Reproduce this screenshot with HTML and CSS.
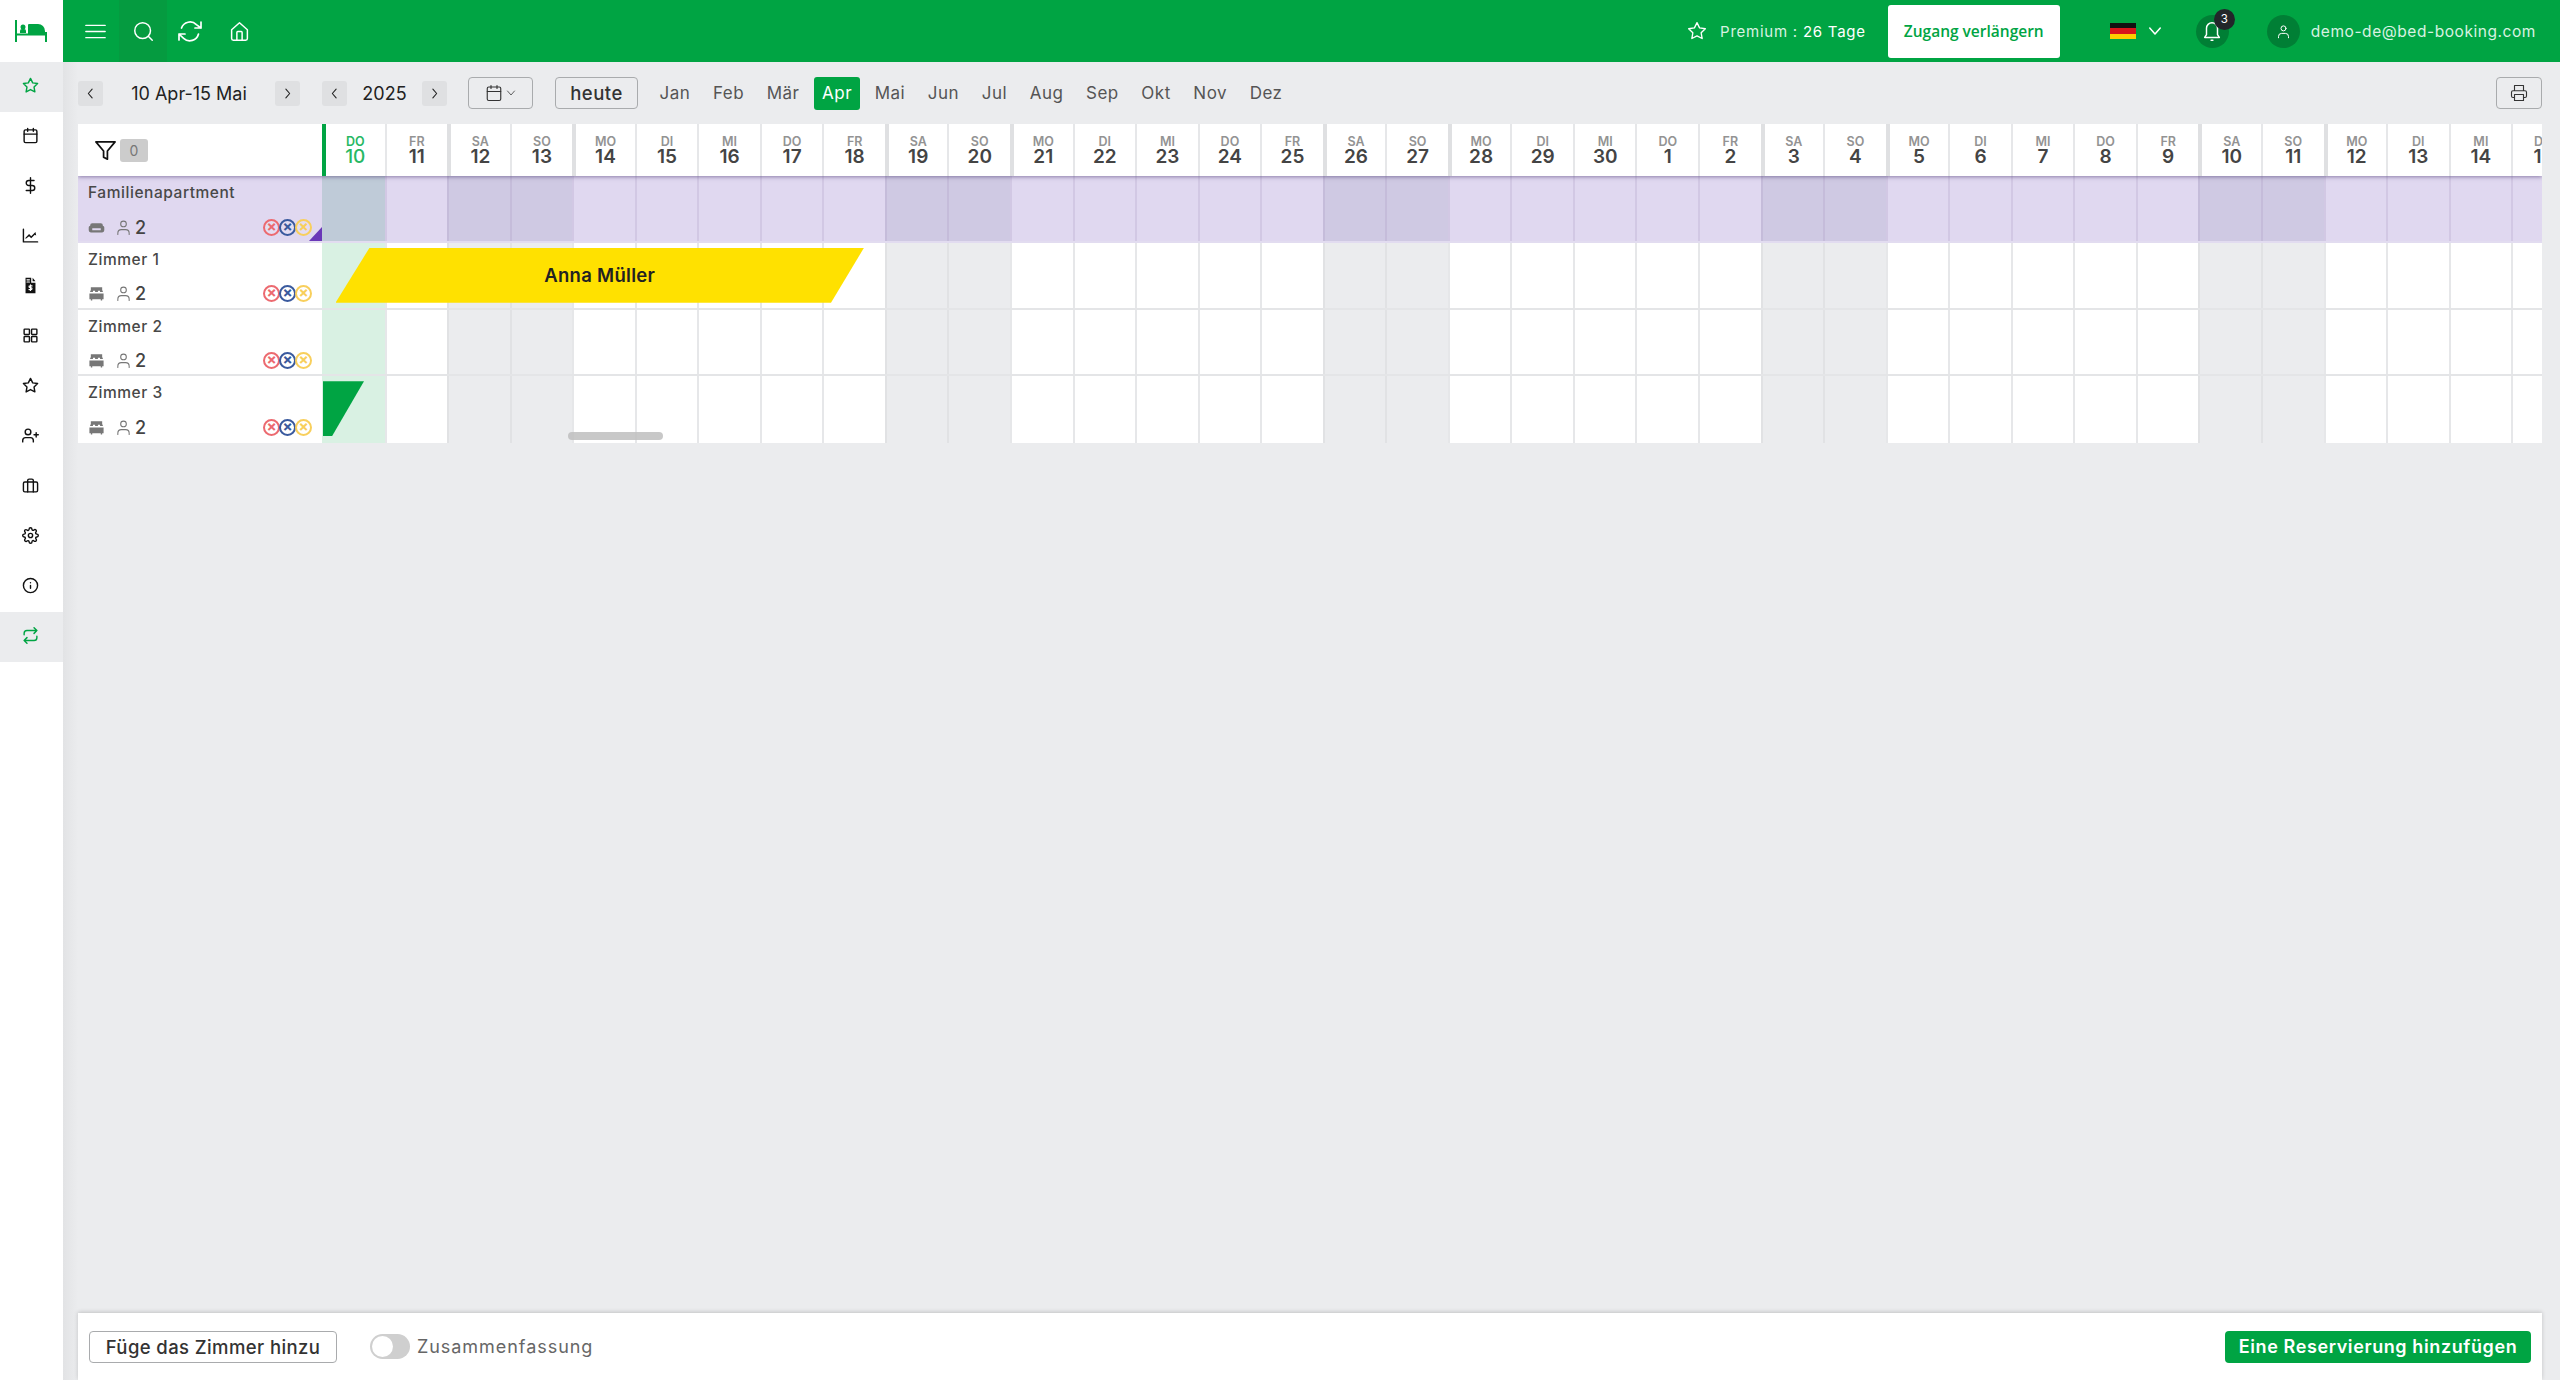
FILE: index.html
```html
<!DOCTYPE html>
<html lang="de">
<head>
  <meta charset="UTF-8" />
  <meta name="viewport" content="width=device-width, initial-scale=1.0" />
  <title>Bed-Booking Kalender</title>
  <link rel="stylesheet" href="styles.css">
</head>
<body>
  <!-- shared icons -->
  <svg class="sprite" xmlns="http://www.w3.org/2000/svg">
    <symbol id="i-star" viewBox="0 0 24 24"><polygon points="12 2 15.09 8.26 22 9.27 17 14.14 18.18 21.02 12 17.77 5.82 21.02 7 14.14 2 9.27 8.91 8.26 12 2"/></symbol>
    <symbol id="i-calendar" viewBox="0 0 24 24"><rect x="3" y="4" width="18" height="18" rx="2"/><path d="M16 2v4M8 2v4M3 10h18"/></symbol>
    <symbol id="i-dollar" viewBox="0 0 24 24"><path d="M12 1v22M17 5H9.5a3.5 3.5 0 0 0 0 7h5a3.5 3.5 0 0 1 0 7H6"/></symbol>
    <symbol id="i-chart" viewBox="0 0 24 24"><path d="M2 3v18h20"/><path class="solid" d="M5 15l5-5 3 3 6-6 1 5-2-1-5 5-3-3-5 4z"/></symbol>
    <symbol id="i-invoice" viewBox="0 0 24 24"><path class="solid" d="M5 1h8v7h6V23H5z"/><path class="solid" d="M15 1l4 5h-4z"/><path class="cut" d="M12 11v8M14.2 12.6h-3a1.3 1.3 0 0 0 0 2.6h1.6a1.3 1.3 0 0 1 0 2.6H9.8M7 4h3.500M7 7h3.500"/></symbol>
    <symbol id="i-grid" viewBox="0 0 24 24"><rect x="3" y="3" width="7.500" height="7.500" rx="1"/><rect x="13.500" y="3" width="7.500" height="7.500" rx="1"/><rect x="13.500" y="13.500" width="7.500" height="7.500" rx="1"/><rect x="3" y="13.500" width="7.500" height="7.500" rx="1"/></symbol>
    <symbol id="i-user-plus" viewBox="0 0 24 24"><path d="M16 21v-2a4 4 0 0 0-4-4H5a4 4 0 0 0-4 4v2"/><circle cx="8.500" cy="7" r="4"/><path d="M20 8v6M23 11h-6"/></symbol>
    <symbol id="i-case" viewBox="0 0 24 24"><rect x="2" y="7" width="20" height="14" rx="2"/><path d="M16 21V5a2 2 0 0 0-2-2h-4a2 2 0 0 0-2 2v16"/></symbol>
    <symbol id="i-gear" viewBox="0 0 24 24"><circle cx="12" cy="12" r="3"/><path d="M19.4 15a1.65 1.65 0 0 0 .33 1.82l.06.06a2 2 0 0 1 0 2.83 2 2 0 0 1-2.83 0l-.06-.06a1.65 1.65 0 0 0-1.82-.33 1.65 1.65 0 0 0-1 1.51V21a2 2 0 0 1-2 2 2 2 0 0 1-2-2v-.09A1.65 1.65 0 0 0 9 19.4a1.65 1.65 0 0 0-1.82.33l-.06.06a2 2 0 0 1-2.83 0 2 2 0 0 1 0-2.83l.06-.06a1.65 1.65 0 0 0 .33-1.82 1.65 1.65 0 0 0-1.51-1H3a2 2 0 0 1-2-2 2 2 0 0 1 2-2h.09A1.65 1.65 0 0 0 4.600 9a1.65 1.65 0 0 0-.33-1.82l-.06-.06a2 2 0 0 1 0-2.83 2 2 0 0 1 2.83 0l.06.06a1.65 1.65 0 0 0 1.82.33H9a1.65 1.65 0 0 0 1-1.51V3a2 2 0 0 1 2-2 2 2 0 0 1 2 2v.09a1.65 1.65 0 0 0 1 1.51 1.65 1.65 0 0 0 1.82-.33l.06-.06a2 2 0 0 1 2.83 0 2 2 0 0 1 0 2.83l-.06.06a1.65 1.65 0 0 0-.33 1.82V9a1.65 1.65 0 0 0 1.51 1H21a2 2 0 0 1 2 2 2 2 0 0 1-2 2h-.09a1.65 1.65 0 0 0-1.51 1z"/></symbol>
    <symbol id="i-info" viewBox="0 0 24 24"><circle cx="12" cy="12" r="10"/><path d="M12 16v-4M12 8h.01"/></symbol>
    <symbol id="i-repeat" viewBox="0 0 24 24"><path d="M17 1l4 4-4 4M3 11V9a4 4 0 0 1 4-4h14M7 23l-4-4 4-4M21 13v2a4 4 0 0 1-4 4H3"/></symbol>
    <symbol id="i-menu" viewBox="0 0 24 24"><path d="M1 5h22M1 12h22M1 19h22"/></symbol>
    <symbol id="i-search" viewBox="0 0 24 24"><circle cx="11" cy="11" r="9"/><path d="M22 22l-4.500-4.500"/></symbol>
    <symbol id="i-refresh" viewBox="0 0 24 24"><path d="M23 3v6h-6M1 21v-6h6M3.510 9a9 9 0 0 1 14.850-3.360L23 9M1 15l4.640 4.360A9 9 0 0 0 20.490 15"/></symbol>
    <symbol id="i-home" viewBox="0 0 24 24"><path d="M3 10l9-8 9 8v10a2 2 0 0 1-2 2H5a2 2 0 0 1-2-2z"/><path d="M9 22v-9a1 1 0 0 1 1-1h4a1 1 0 0 1 1 1v9"/></symbol>
    <symbol id="i-bell" viewBox="0 0 24 24"><path d="M18 16V9a6 6 0 0 0-12 0v7l-2 3h16z"/><path d="M11 22h2"/></symbol>
    <symbol id="i-user" viewBox="0 0 24 24"><circle cx="12" cy="7" r="4"/><path d="M4 22v-2a5 5 0 0 1 5-5h6a5 5 0 0 1 5 5v2"/></symbol>
    <symbol id="i-chevron" viewBox="0 0 24 24"><path d="M5 8l7 8 7-8"/></symbol>
    <symbol id="i-left" viewBox="0 0 24 24"><path d="M15 4l-7 8 7 8"/></symbol>
    <symbol id="i-right" viewBox="0 0 24 24"><path d="M9 4l7 8-7 8"/></symbol>
    <symbol id="i-printer" viewBox="0 0 24 24"><path d="M6 9V2h12v7M6 18H4a2 2 0 0 1-2-2v-5a2 2 0 0 1 2-2h16a2 2 0 0 1 2 2v5a2 2 0 0 1-2 2h-2"/><rect x="6" y="14" width="12" height="8"/></symbol>
    <symbol id="i-filter" viewBox="0 0 24 24"><polygon points="22 3 2 3 10 12.460 10 19 14 21 14 12.460 22 3"/></symbol>
    <symbol id="i-bed" viewBox="0 0 24 24"><path class="solid" d="M4 3h16v4l1 2v1h-4V8h-3v2h-4V8H7v2H3V9l1-2zM2 12h20v8h-2v2h-2v-2H6v2H4v-2H2z"/></symbol>
    <symbol id="i-sofa" viewBox="0 0 24 24"><path class="solid" d="M6 6h12a3 3 0 0 1 3 3v1a2 2 0 0 1 2 2v4a3 3 0 0 1-3 3H4a3 3 0 0 1-3-3v-4a2 2 0 0 1 2-2V9a3 3 0 0 1 3-3zm0 7v3h12v-3z"/></symbol>
  </svg>

  <div class="app">
    <aside class="sidebar">
      <div class="logo">
        <svg class="logo-bed" viewBox="0 0 32 22"><path class="logo-line" d="M1 0v22M1 14.500h30M31 12v10"/><circle cx="8" cy="7" r="2.500"/><path d="M5 13v-2a2 2 0 0 1 2-2h2a2 2 0 0 1 2 2v2z"/><path d="M13 14V5a1 1 0 0 1 1-1h9a7 7 0 0 1 7 7v3z"/></svg>
      </div>
      <nav class="side-nav">
        <a class="side-item active"><svg class="icon"><use href="#i-star"/></svg></a>
        <a class="side-item"><svg class="icon"><use href="#i-calendar"/></svg></a>
        <a class="side-item"><svg class="icon"><use href="#i-dollar"/></svg></a>
        <a class="side-item"><svg class="icon"><use href="#i-chart"/></svg></a>
        <a class="side-item"><svg class="icon"><use href="#i-invoice"/></svg></a>
        <a class="side-item"><svg class="icon"><use href="#i-grid"/></svg></a>
        <a class="side-item"><svg class="icon"><use href="#i-star"/></svg></a>
        <a class="side-item"><svg class="icon"><use href="#i-user-plus"/></svg></a>
        <a class="side-item"><svg class="icon"><use href="#i-case"/></svg></a>
        <a class="side-item"><svg class="icon"><use href="#i-gear"/></svg></a>
        <a class="side-item"><svg class="icon"><use href="#i-info"/></svg></a>
        <a class="side-item active"><svg class="icon"><use href="#i-repeat"/></svg></a>
      </nav>
    </aside>

    <div class="main">
      <header class="topbar">
        <div class="top-left">
          <a class="top-btn"><svg class="icon"><use href="#i-menu"/></svg></a>
          <a class="top-btn current"><svg class="icon"><use href="#i-search"/></svg></a>
          <a class="top-btn"><svg class="icon wide"><use href="#i-refresh"/></svg></a>
          <a class="top-btn"><svg class="icon"><use href="#i-home"/></svg></a>
        </div>
        <div class="top-right">
          <svg class="icon premium-star"><use href="#i-star"/></svg>
          <span class="premium">Premium : <b>26 Tage</b></span>
          <a class="extend">Zugang verlängern</a>
          <div class="lang">
            <span class="flag"></span>
            <svg class="icon"><use href="#i-chevron"/></svg>
          </div>
          <a class="round-btn bell">
            <svg class="icon"><use href="#i-bell"/></svg>
            <span class="badge">3</span>
          </a>
          <a class="round-btn"><svg class="icon"><use href="#i-user"/></svg></a>
          <span class="email">demo-de@bed-booking.com</span>
        </div>
      </header>

      <div class="toolbar">
        <button class="step"><svg class="icon"><use href="#i-left"/></svg></button>
        <span class="range">10 Apr-15 Mai</span>
        <button class="step"><svg class="icon"><use href="#i-right"/></svg></button>
        <button class="step step-year"><svg class="icon"><use href="#i-left"/></svg></button>
        <span class="year">2025</span>
        <button class="step"><svg class="icon"><use href="#i-right"/></svg></button>
        <button class="outline cal-btn">
          <svg class="icon"><use href="#i-calendar"/></svg>
          <svg class="icon small"><use href="#i-chevron"/></svg>
        </button>
        <button class="outline today-btn">heute</button>
        <div class="months">
          <a>Jan</a><a>Feb</a><a>Mär</a><a class="active">Apr</a><a>Mai</a><a>Jun</a>
          <a>Jul</a><a>Aug</a><a>Sep</a><a>Okt</a><a>Nov</a><a>Dez</a>
        </div>
        <button class="outline print-btn"><svg class="icon"><use href="#i-printer"/></svg></button>
      </div>

      <div class="content">
        <div class="planner">
          <div class="planner-head">
            <div class="filter-cell">
              <svg class="icon"><use href="#i-filter"/></svg>
              <span class="filter-count">0</span>
            </div>
            <div class="days" id="headDays"></div>
          </div>

          <div class="room-row group">
            <div class="room-cell">
              <div class="room-name">Familienapartment</div>
              <div class="room-info">
                <svg class="icon bed"><use href="#i-sofa"/></svg>
                <svg class="icon person"><use href="#i-user"/></svg>
                <span class="beds">2</span>
                <div class="channels"><i class="red">×</i><i class="blue">×</i><i class="yellow">×</i></div>
              </div>
              <span class="corner"></span>
            </div>
            <div class="days room-days"></div>
          </div>

          <div class="room-row">
            <div class="room-cell">
              <div class="room-name">Zimmer 1</div>
              <div class="room-info">
                <svg class="icon bed"><use href="#i-bed"/></svg>
                <svg class="icon person"><use href="#i-user"/></svg>
                <span class="beds">2</span>
                <div class="channels"><i class="red">×</i><i class="blue">×</i><i class="yellow">×</i></div>
              </div>
            </div>
            <div class="days room-days"></div>
            <div class="booking yellow-bar">Anna Müller</div>
          </div>

          <div class="room-row">
            <div class="room-cell">
              <div class="room-name">Zimmer 2</div>
              <div class="room-info">
                <svg class="icon bed"><use href="#i-bed"/></svg>
                <svg class="icon person"><use href="#i-user"/></svg>
                <span class="beds">2</span>
                <div class="channels"><i class="red">×</i><i class="blue">×</i><i class="yellow">×</i></div>
              </div>
            </div>
            <div class="days room-days"></div>
          </div>

          <div class="room-row">
            <div class="room-cell">
              <div class="room-name">Zimmer 3</div>
              <div class="room-info">
                <svg class="icon bed"><use href="#i-bed"/></svg>
                <svg class="icon person"><use href="#i-user"/></svg>
                <span class="beds">2</span>
                <div class="channels"><i class="red">×</i><i class="blue">×</i><i class="yellow">×</i></div>
              </div>
            </div>
            <div class="days room-days"></div>
            <div class="booking green-bar"></div>
          </div>

          <div class="scroll-thumb"></div>
        </div>
      </div>

      <footer class="footer">
        <button class="outline add-room">Füge das Zimmer hinzu</button>
        <span class="toggle"></span>
        <span class="toggle-label">Zusammenfassung</span>
        <button class="add-booking">Eine Reservierung hinzufügen</button>
      </footer>
    </div>
  </div>

  <script src="planner.js"></script>
</body>
</html>
```

FILE: styles.css
```css
* {
  box-sizing: border-box;
}
body {
  margin: 0;
  height: 1380px;
  overflow: hidden;
  font-family: Inter, "Open Sans", sans-serif;
  background-color: #ebecee;
  color: #333;
}
.sprite {
  display: none;
}
.icon {
  width: 18px;
  height: 18px;
  fill: none;
  stroke: currentColor;
  stroke-width: 2;
  stroke-linecap: round;
  stroke-linejoin: round;
  flex: none;
}
.solid {
  fill: currentColor;
  stroke: none;
}
.cut {
  fill: none;
  stroke: #fff;
  stroke-width: 1.6;
}
button {
  font-family: inherit;
  cursor: pointer;
}
.app {
  display: flex;
  height: 100%;
}

/* sidebar */
.sidebar {
  width: 63px;
  flex: none;
  background: #fff;
}
.logo {
  height: 62px;
  padding-right: 1px;
  display: flex;
  align-items: center;
  justify-content: center;
}
.logo-bed {
  width: 32px;
  height: 22px;
  fill: #00a443;
}
.logo-line {
  fill: none;
  stroke: #00a443;
  stroke-width: 2;
}
.side-item {
  height: 50px;
  padding: 0 3px 4px 0;
  display: flex;
  align-items: center;
  justify-content: center;
  color: #111;
}
.side-item .icon {
  width: 17px;
  height: 17px;
}
.side-item.active {
  background: #ebecee;
  color: #00a443;
}

/* top bar */
.main {
  flex: 1;
  min-width: 0;
  display: flex;
  flex-direction: column;
  background: linear-gradient(to right, #e2e3e5, #ebecee 15px);
}
.topbar {
  height: 62px;
  flex: none;
  background: #00a443;
  color: #fff;
  display: flex;
  align-items: center;
  justify-content: space-between;
}
.top-left {
  display: flex;
  height: 100%;
  padding-left: 8px;
}
.top-btn {
  width: 48px;
  display: flex;
  align-items: center;
  justify-content: center;
}
.top-btn .icon {
  width: 21px;
  height: 21px;
  stroke-width: 1.7;
}
.top-btn .icon.wide {
  width: 24px;
  height: 24px;
  margin-right: 2px;
}
.top-btn.current {
  background: #059b40;
}
.top-right {
  display: flex;
  align-items: center;
  padding-right: 24px;
}
.premium-star {
  stroke-width: 1.6;
  width: 20px;
  height: 20px;
}
.premium {
  margin-left: 13px;
  font-size: 15px;
  letter-spacing: 0.75px;
  color: #d8f2e1;
  white-space: nowrap;
}
.premium b {
  font-weight: 400;
  color: #fff;
}
.extend {
  margin-left: 22px;
  width: 172px;
  height: 53px;
  background: #fff;
  color: #00a443;
  border-radius: 3px;
  font-family: "Open Sans", sans-serif;
  font-weight: 600;
  font-size: 15.500px;
  display: flex;
  align-items: center;
  justify-content: center;
}
.lang {
  margin-left: 50px;
  display: flex;
  align-items: center;
  gap: 10px;
}
.flag {
  width: 26px;
  height: 16px;
  background: linear-gradient(#111 33.3%, #d8141c 33.3%, #d8141c 66.6%, #ffcc00 66.6%);
}
.round-btn {
  position: relative;
  width: 33px;
  height: 33px;
  border-radius: 50%;
  background: #007f35;
  display: flex;
  align-items: center;
  justify-content: center;
  margin-left: 38px;
}
.round-btn .icon {
  width: 15px;
  height: 15px;
  stroke-width: 1.6;
}
.bell {
  margin-left: 32px;
}
.bell .icon {
  width: 22px;
  height: 22px;
}
.badge {
  position: absolute;
  top: -6px;
  right: -6px;
  width: 21px;
  height: 21px;
  border-radius: 50%;
  background: #22262a;
  font-size: 11.500px;
  display: flex;
  align-items: center;
  justify-content: center;
}
.email {
  margin-left: 11px;
  font-size: 15.500px;
  letter-spacing: 0.56px;
  color: #d8f2e1;
}

/* toolbar */
.toolbar {
  height: 62px;
  flex: none;
  display: flex;
  align-items: center;
  padding: 0 18px 0 15px;
}
.step {
  width: 25px;
  height: 25px;
  padding: 0;
  border: none;
  border-radius: 3px;
  background: #dfe0e2;
  color: #222;
  display: flex;
  align-items: center;
  justify-content: center;
}
.step .icon {
  width: 13px;
  height: 13px;
}
.step-year {
  margin-left: 22px;
}
.range {
  width: 172px;
  text-align: center;
  font-size: 18px;
  color: #222;
}
.year {
  width: 75px;
  text-align: center;
  font-size: 18px;
  color: #222;
}
.outline {
  height: 32px;
  border: 1.500px solid #a9abad;
  border-radius: 4px;
  background: transparent;
  color: #333;
  display: flex;
  align-items: center;
  justify-content: center;
}
.cal-btn {
  margin-left: 21px;
  width: 65px;
  gap: 2px;
  padding: 0;
}
.cal-btn .icon {
  stroke-width: 1.500;
}
.cal-btn .small {
  width: 12px;
  height: 12px;
}
.today-btn {
  margin-left: 22px;
  width: 83px;
  font-size: 18.500px;
  font-weight: 500;
  letter-spacing: 0.5px;
}
.months {
  display: flex;
  align-items: center;
  gap: 6.600px;
  margin-left: 13.500px;
  font-size: 17px;
  letter-spacing: 0.5px;
  color: #555;
}
.months a {
  height: 33px;
  padding: 0 8px;
  display: flex;
  align-items: center;
  border-radius: 3px;
}
.months a.active {
  background: #00a443;
  color: #fff;
}
.print-btn {
  margin-left: auto;
  width: 46px;
  padding: 0;
}
.print-btn .icon {
  stroke-width: 1.500;
}

/* planner */
.content {
  flex: 1;
  min-height: 0;
  padding: 0 18px 0 15px;
}
.planner {
  position: relative;
  overflow: hidden;
}
.planner-head {
  position: relative;
  z-index: 2;
  display: flex;
  height: 52px;
  background: #fff;
  box-shadow: 0 1px 4px rgba(70, 50, 110, 0.55);
}
.filter-cell {
  width: 244px;
  flex: none;
  display: flex;
  align-items: center;
  padding-left: 16px;
  gap: 3px;
  color: #111;
}
.filter-cell .icon {
  width: 23px;
  height: 23px;
  stroke-width: 1.800;
}
.filter-count {
  width: 28px;
  height: 23px;
  border-radius: 3px;
  background: #ccc;
  color: #777;
  font-size: 14px;
  display: flex;
  align-items: center;
  justify-content: center;
}
.days {
  display: flex;
  flex: 1;
  min-width: 0;
  overflow: hidden;
}
.day {
  flex: 0 0 62.550px;
  border-left: 2px solid #e6e7e9;
}
.head-day {
  height: 52px;
  padding-top: 1px;
  display: flex;
  flex-direction: column;
  align-items: center;
  justify-content: center;
  color: #939393;
}
.head-day.week-edge {
  border-left: 4px solid #dfe0e2;
}
.head-day.today {
  border-left: 4px solid #00a443;
  color: #27b864;
}
.head-day small {
  font-size: 12.500px;
  font-weight: 600;
  line-height: 13px;
}
.head-day strong {
  font-size: 19px;
  font-weight: 600;
  line-height: 18px;
  color: #444;
}
.head-day.today strong {
  color: #27b864;
  font-weight: 500;
}

.room-row {
  position: relative;
  display: flex;
  height: 66.750px;
  background: #fff;
  border-bottom: 2px solid #e4e5e7;
}
.room-row:nth-last-child(2) {
  border-bottom: none;
}
.room-cell {
  position: relative;
  width: 244px;
  flex: none;
  padding: 8px 10px 0 10px;
}
.room-name {
  font-size: 15.500px;
  font-weight: 500;
  line-height: 18px;
  letter-spacing: 0.55px;
  color: #484848;
}
.room-info {
  display: flex;
  align-items: center;
  margin-top: 15px;
  height: 20px;
  color: #777;
}
.bed {
  width: 17px;
  height: 17px;
}
.person {
  margin-left: 10px;
  width: 17px;
  height: 17px;
  stroke-width: 1.500;
}
.beds {
  margin-left: 3px;
  font-size: 18px;
  font-weight: 500;
  color: #444;
}
.channels {
  margin-left: auto;
  display: flex;
}
.channels i {
  width: 17px;
  height: 17px;
  margin-left: -1px;
  border: 2px solid;
  border-radius: 50%;
  font-style: normal;
  font-size: 15px;
  font-weight: 700;
  line-height: 12px;
  text-align: center;
  background: rgba(255, 255, 255, 0.15);
}
.channels .red {
  color: #ec6a70;
}
.channels .blue {
  color: #3a5a9e;
}
.channels .yellow {
  color: #f8cf5c;
}
.corner {
  position: absolute;
  right: 0;
  bottom: 0;
  border-style: solid;
  border-width: 0 0 14px 13px;
  border-color: transparent transparent #6a38b8 transparent;
}
.cell {
  height: 100%;
}
.cell.weekend {
  background: #ebecee;
  border-left-color: #e1e2e4;
}
.cell.today {
  background: #d9f1e3;
  border-left: none;
}
.group,
.group .cell {
  background: #e0d8f0;
  border-left-color: #d2c8e4;
}
.group {
  border-bottom-color: #e2dcf0;
}
.group .cell.weekend {
  background: #cfc9e3;
  border-left-color: #c5bcda;
}
.group .cell.today {
  background: #bfcbd8;
}
.booking {
  position: absolute;
  top: 5px;
  height: 55px;
}
.yellow-bar {
  left: 257.500px;
  width: 528.500px;
  background: #ffe100;
  clip-path: polygon(34px 0, 100% 0, calc(100% - 33px) 100%, 0 100%);
  font-size: 18.500px;
  font-weight: 600;
  letter-spacing: 0.3px;
  color: #222;
  display: flex;
  align-items: center;
  justify-content: center;
}
.green-bar {
  left: 245px;
  width: 41px;
  background: #00a443;
  clip-path: polygon(0 0, 100% 0, 9px 100%, 0 100%);
}
.scroll-thumb {
  position: absolute;
  left: 490px;
  top: 308px;
  width: 95px;
  height: 8px;
  border-radius: 4px;
  background: rgba(190, 190, 190, 0.85);
}

/* footer */
.footer {
  height: 67px;
  flex: none;
  margin: 0 18px 0 15px;
  padding: 0 11px;
  background: #fff;
  box-shadow: 0 -1px 4px rgba(0, 0, 0, 0.18);
  display: flex;
  align-items: center;
}
.add-room {
  width: 248px;
  height: 32px;
  background: #fff;
  font-size: 18.500px;
  font-weight: 500;
  letter-spacing: 0.4px;
  color: #333;
}
.toggle {
  position: relative;
  margin-left: 33px;
  width: 40px;
  height: 25px;
  border-radius: 13px;
  background: #cfcfcf;
}
.toggle::before {
  content: "";
  position: absolute;
  left: 2px;
  top: 2px;
  width: 21px;
  height: 21px;
  border-radius: 50%;
  background: #fff;
}
.toggle-label {
  margin-left: 7px;
  font-size: 18px;
  letter-spacing: 0.95px;
  color: #666;
}
.add-booking {
  margin-left: auto;
  width: 306px;
  height: 32px;
  border: none;
  border-radius: 4px;
  background: #00a443;
  color: #fff;
  font-size: 18px;
  font-weight: 600;
  letter-spacing: 0.6px;
}
```

FILE: planner.js
```js
const names = ['SO', 'MO', 'DI', 'MI', 'DO', 'FR', 'SA'];
const firstDay = new Date(2025, 3, 10);
const dayCount = 36;
const dates = [];

for (let i = 0; i < dayCount; i++) {
  dates.push(new Date(2025, 3, firstDay.getDate() + i));
}

function isWeekend(date) {
  return date.getDay() === 0 || date.getDay() === 6;
}

// Header cells
const headDays = document.getElementById('headDays');
dates.forEach((date, index) => {
  const cell = document.createElement('div');
  cell.className = 'day head-day';
  if (index === 0) cell.classList.add('today');
  if (date.getDay() === 6 || date.getDay() === 1) cell.classList.add('week-edge');
  cell.innerHTML = `<small>${names[date.getDay()]}</small><strong>${date.getDate()}</strong>`;
  headDays.appendChild(cell);
});

// Empty day cells of every room
document.querySelectorAll('.room-days').forEach(row => {
  dates.forEach((date, index) => {
    const cell = document.createElement('div');
    cell.className = 'day cell';
    if (index === 0) cell.classList.add('today');
    if (isWeekend(date)) cell.classList.add('weekend');
    row.appendChild(cell);
  });
});
```
